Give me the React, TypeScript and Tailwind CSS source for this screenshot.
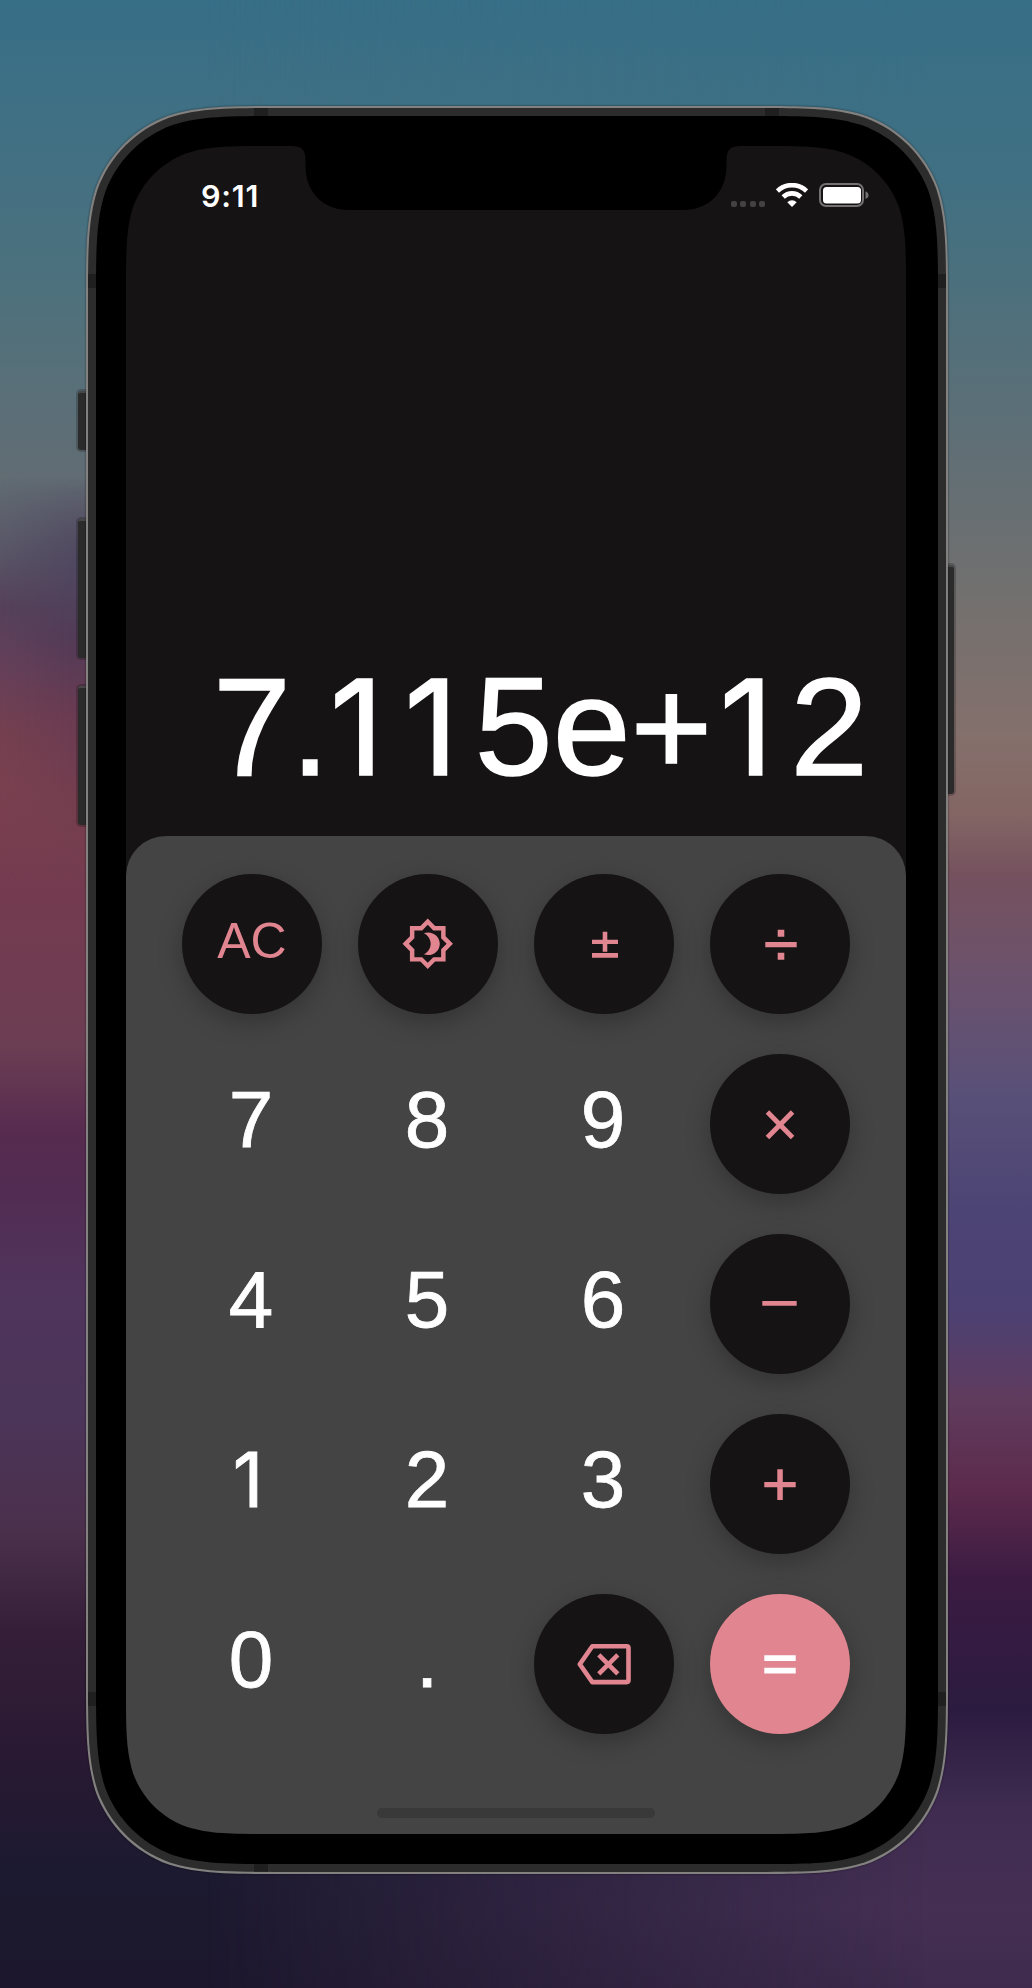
import React from "react";

// Smooth "continuous" corner outline for a w x h box with nominal radius r.
function smoothRect(w: number, h: number, r: number) {
  const a = 1.52866 * r, b = 1.08849 * r, c = 0.86841 * r, d = 0.63149 * r;
  const e = 0.07491 * r, f = 0.37282 * r, g = 0.16906 * r;
  return `path("M${a} 0 H${w - a} C${w - b} 0 ${w - c} 0 ${w - d} ${e} C${w - f} ${g} ${w - g} ${f} ${w - e} ${d} C${w} ${c} ${w} ${b} ${w} ${a} V${h - a} C${w} ${h - b} ${w} ${h - c} ${w - e} ${h - d} C${w - g} ${h - f} ${w - f} ${h - g} ${w - d} ${h - e} C${w - c} ${h} ${w - b} ${h} ${w - a} ${h} H${a} C${b} ${h} ${c} ${h} ${d} ${h - e} C${f} ${h - g} ${g} ${h - f} ${e} ${h - d} C0 ${h - c} 0 ${h - b} 0 ${h - a} V${a} C0 ${b} 0 ${c} ${e} ${d} C${g} ${f} ${f} ${g} ${d} ${e} C${c} 0 ${b} 0 ${a} 0 Z")`;
}

function Sym({ d }: { d: string }) {
  return (
    <svg viewBox="0 0 70 70" className="h-[70px] w-[70px]" fill="currentColor">
      <path d={d} fillRule="evenodd" />
    </svg>
  );
}

const icons = {
  theme: (
    <svg viewBox="0 0 24 24" className="h-[53.5px] w-[53.5px]" fill="currentColor">
      <path
        fillRule="evenodd"
        d="M20 8.69V4h-4.69L12 .69 8.69 4H4v4.69L.69 12 4 15.31V20h4.69L12 23.31 15.31 20H20v-4.69L23.31 12 20 8.69zm-2 5.79V18h-3.52L12 20.48 9.52 18H6v-3.52L3.52 12 6 9.52V6h3.52L12 3.52 14.48 6H18v3.52L20.48 12 18 14.48z"
      />
      <path d="M12.2 6.9c-.7 0-1.35.13-1.95.37C12.1 8.2 13.3 9.9 13.3 12s-1.2 3.8-3.05 4.73c.6.24 1.25.37 1.95.37 2.87 0 5.2-2.25 5.2-5.1s-2.33-5.1-5.2-5.1z" />
    </svg>
  ),
  pm: <Sym d="M33.7 22.7h4.6v8H49V35H38.3v7.7h-4.6V35H23v-4.3h10.7zM23 44h26v4.7H23z" />,
  divide: <Sym d="M32.7 20.7h6.6v7h-6.6zM20.3 33h31.4v5.3H20.3zM32.7 43.8h6.6v7h-6.6z" />,
  times: <Sym d="M20.7 24.8l3.5-3.5L35 32.3l10.8-11 3.5 3.5L38.5 35.8l10.8 11-3.5 3.5L35 39.3l-10.8 11-3.5-3.5 10.8-11z" />,
  minus: <Sym d="M17.3 32h34.4v4.7H17.3z" />,
  plus: <Sym d="M32.3 20.3H37.8V33H50.7v5.3H37.8V51h-5.5V38.3h-13V33h13z" />,
  equals: <Sym d="M19.3 26.3h31.4v5.6H19.3zM19.3 38.8h31.4v5.6H19.3z" />,
  back: (
    <svg viewBox="0 0 54 42" className="h-[42px] w-[54px]" fill="none" stroke="currentColor" strokeWidth="4.6">
      <path strokeLinejoin="round" d="M15.3 3.3h34.4q1.8 0 1.8 1.8v32.2q0 1.8-1.8 1.8H15.3L2.8 21.2z" />
      <path d="M21.8 11.9l19 19M40.800 11.900l-19 19" />
    </svg>
  ),
};

// A footless "1" aligned in a tabular-width cell.
function One({ tight = false }: { tight?: boolean }) {
  return (
    <span
      className={
        "inline-block pr-[0.128em] text-right font-['Inter'] text-[0.945em] leading-none " +
        (tight ? "w-[0.509em]" : "w-[0.588em]")
      }
    >
      1
    </span>
  );
}

type Key = { id: string; label?: React.ReactNode; icon?: React.ReactNode; kind: "num" | "op" | "eq" };
const num = (s: string): Key => ({ id: s, label: s, kind: "num" });
const op = (id: string, icon: React.ReactNode): Key => ({ id, icon, kind: "op" });

const keys: Key[] = [
  { id: "AC", label: "AC", kind: "op" }, op("theme", icons.theme), op("pm", icons.pm), op("divide", icons.divide),
  num("7"), num("8"), num("9"), op("times", icons.times),
  num("4"), num("5"), num("6"), op("minus", icons.minus),
  { id: "1", label: <One />, kind: "num" }, num("2"), num("3"), op("plus", icons.plus),
  num("0"), num("."), op("back", icons.back), { id: "eq", icon: icons.equals, kind: "eq" },
];

const looks = {
  num: "text-white text-[80px] pb-[9px] pr-[2px] [-webkit-text-stroke:0.8px_#fff]",
  op: "bg-[#151314] text-[#e18690] text-[50px] shadow-[0_8px_24px_rgba(0,0,0,0.25)]",
  eq: "bg-[#e18690] text-white shadow-[0_8px_24px_rgba(0,0,0,0.25)]",
};

function KeyButton({ k }: { k: Key }) {
  return (
    <button className={"flex h-[140px] w-[140px] items-center justify-center rounded-full leading-none " + looks[k.kind]}>
      {k.icon ?? <span className={k.kind === "op" ? "pb-[7px]" : ""}>{k.label}</span>}
    </button>
  );
}

function StatusBar() {
  return (
    <div className="flex h-[64px] items-start justify-between pl-[75px] pr-[37px] pt-[31px]">
      <span className="font-['Inter'] text-[30.5px] font-semibold leading-[37px] tracking-[0.8px] text-white">9:11</span>
      <div className="flex items-start pt-[6px]">
        <div className="mr-[11px] mt-[18px] flex gap-[3.4px]">
          {[0, 1, 2, 3].map((i) => (
            <span key={i} className="h-[6px] w-[6px] rounded-[2px] bg-[#434142]" />
          ))}
        </div>
        <svg viewBox="0 0 32 24" className="mr-[11px] h-[24px] w-[32px]" fill="none" stroke="#fff" strokeWidth="4.6">
          <path d="M1.4 8a21 21 0 0 1 29.2 0" />
          <path d="M7.2 14a12.5 12.5 0 0 1 17.6 0" />
          <path d="M11.3 19.2a6.8 6.8 0 0 1 9.4 0L16 23.9z" fill="#fff" stroke="none" />
        </svg>
        <svg viewBox="0 0 50 24" className="h-[24px] w-[50px]">
          <rect x="1" y="1" width="43" height="22" rx="6" fill="none" stroke="#737172" strokeWidth="2" />
          <rect x="4" y="4" width="38" height="16.5" rx="3.5" fill="#fff" />
          <path d="M46.5 8.3c2.2 1 3 2.2 3 3.9s-.8 2.9-3 3.9z" fill="#737172" />
        </svg>
      </div>
    </div>
  );
}

function Screen() {
  return (
    <div
      className="relative flex h-[1688px] w-[780px] flex-col bg-[#151314] font-['Liberation_Sans',sans-serif]"
      style={{ clipPath: smoothRect(780, 1688, 96) }}
    >
      <svg viewBox="0 0 450 65" className="absolute left-[165px] top-0 h-[65px] w-[450px]">
        <path d="M0 0C11 0 14.5 4 14.5 14.5V20C14.5 46 32 64 58 64H392C418 64 435.5 46 435.5 20V14.5C435.5 4 439 0 450 0Z" fill="#000" />
      </svg>
      <StatusBar />
      <div className="flex h-[626px] items-end justify-end pb-[39px] pr-[38px]">
        <span className="whitespace-nowrap text-[140px] leading-[140px] text-white [-webkit-text-stroke:1.5px_#fff]">
          7.<One tight /><One />5e+<One />2
        </span>
      </div>
      <div className="flex grow flex-col items-center justify-between rounded-t-[40px] bg-[#444] pb-[16px] pt-[38px]">
        <div className="grid grid-cols-4 gap-x-9 gap-y-10">
          {keys.map((k) => <KeyButton key={k.id} k={k} />)}
        </div>
        <div className="h-[10px] w-[278px] rounded-full bg-[#393939]" />
      </div>
    </div>
  );
}

function SideButton({ className }: { className: string }) {
  return (
    <span className={"absolute rounded-[3px] border-t-2 border-[#484848] bg-[#2b2b2b] shadow-[0_0_0_2px_rgba(0,0,0,0.2)] " + className} />
  );
}

function Phone() {
  return (
    <div className="relative w-[862px]">
      <SideButton className="left-[-8px] top-[285px] h-[59px] w-[12px]" />
      <SideButton className="left-[-8px] top-[413px] h-[139px] w-[12px]" />
      <SideButton className="left-[-8px] top-[580px] h-[139px] w-[12px]" />
      <SideButton className="right-[-6px] top-[459px] h-[229px] w-[12px]" />
      <div className="relative drop-shadow-[0_0_1px_rgba(0,0,0,0.5)]">
        <div className="h-[1768px] w-[862px] bg-[#828180] p-[2px]" style={{ clipPath: smoothRect(862, 1768, 130) }}>
          <div className="relative h-[1764px] w-[858px] bg-[#2c2c2c] p-[8px]" style={{ clipPath: smoothRect(858, 1764, 128.5) }}>
            <span className="absolute left-[166px] top-0 h-full w-[14px] bg-[#1f1f1f]" />
            <span className="absolute right-[167px] top-0 h-[8px] w-[14px] bg-[#1f1f1f]" />
            <span className="absolute left-0 top-[166px] h-[14px] w-full bg-[#1f1f1f]" />
            <span className="absolute bottom-[166px] left-0 h-[14px] w-full bg-[#1f1f1f]" />
            <div className="relative h-[1748px] w-[842px] bg-black pl-[30px] pt-[30px]" style={{ clipPath: smoothRect(842, 1748, 121) }}>
              <Screen />
            </div>
          </div>
        </div>
      </div>
    </div>
  );
}

export default function App() {
  return (
    <div className="relative h-[1988px] w-[1032px] overflow-hidden">
      <div className="absolute inset-y-0 left-0 w-full bg-[linear-gradient(180deg,#376f87_0%,#447082_9%,#4e717c_15%,#5a6f78_20%,#616c73_24%,#5a5868_27.5%,#55415a_30.5%,#66405a_33.5%,#75404f_37%,#7a4150_39.5%,#743b50_45%,#703c51_49%,#6c3e53_52.5%,#572b50_57%,#522c52_60%,#50345c_64.5%,#4b3559_71%,#4b304c_77%,#351f38_82%,#2a1933_88%,#1c1a30_94%,#1c172d_100%)]" />
      <div className="absolute inset-y-0 left-0 w-[90px] bg-[linear-gradient(180deg,transparent_24%,#504860_28.5%,#523b57_32%,#6a3b52_36%,#743e4f_40%,transparent_45%)] [mask-image:linear-gradient(90deg,transparent,#000_80%)]" />
      <div className="absolute inset-y-0 left-0 w-full bg-[linear-gradient(180deg,#376f87_0%,#407083_9%,#4b707d_14%,#5a6f78_20%,#686f72_26%,#75706e_31%,#84706c_37%,#836564_41%,#75515e_44%,#6c526c_49%,#595078_55%,#4c4474_61%,#4c4172_66%,#603b5d_70.5%,#5c2a4c_75%,#3b1b42_79.5%,#2c1b40_86%,#3f2c50_91%,#453054_96%,#3e2b4d_100%)] [mask-image:linear-gradient(90deg,transparent_20%,#000_90%)]" />
      <div className="relative pl-[86px] pt-[106px]">
        <Phone />
      </div>
    </div>
  );
}
